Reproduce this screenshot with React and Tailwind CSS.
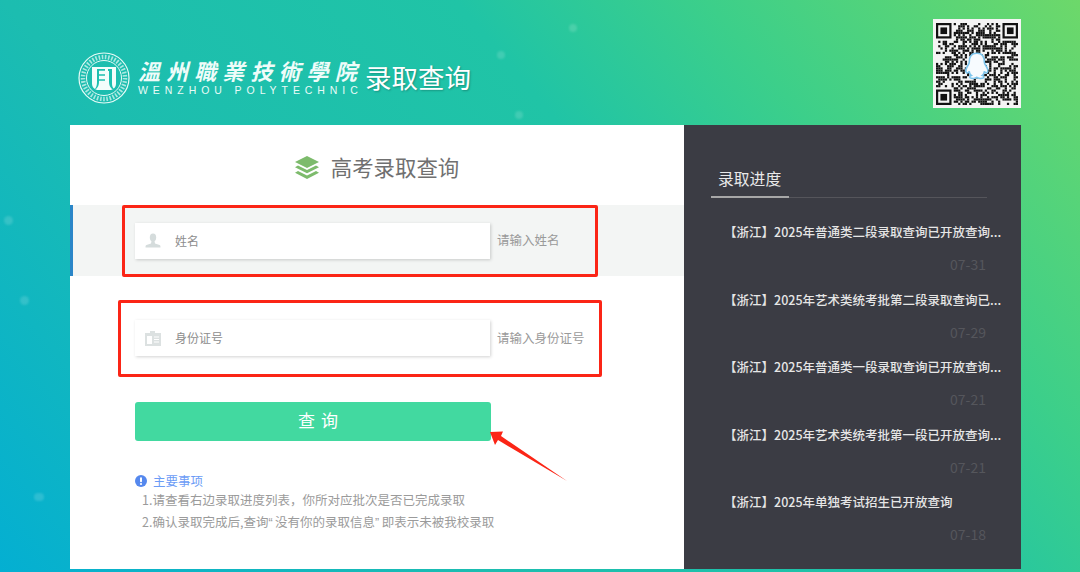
import React from "react";

const cjk = { fontFamily: '"Noto Sans CJK SC", "Liberation Sans", sans-serif' };

const progressItems = [
  { title: "【浙江】2025年普通类二段录取查询已开放查询...", date: "07-31" },
  { title: "【浙江】2025年艺术类统考批第二段录取查询已...", date: "07-29" },
  { title: "【浙江】2025年普通类一段录取查询已开放查询...", date: "07-21" },
  { title: "【浙江】2025年艺术类统考批第一段已开放查询...", date: "07-21" },
  { title: "【浙江】2025年单独考试招生已开放查询", date: "07-18" },
];

const dots = [
  "left-[569px] top-[24px] w-[8px] h-[8px]",
  "left-[497px] top-[51px] w-[8px] h-[8px]",
  "left-[515px] top-[111px] w-[8px] h-[8px]",
  "left-[4px] top-[216px] w-[9px] h-[9px]",
  "left-[20px] top-[296px] w-[9px] h-[9px]",
  "left-[34px] top-[493px] w-[10px] h-[8px]",
];

function Seal() {
  return (
    <svg width="52" height="52" viewBox="0 0 52 52" fill="none" className="shrink-0">
      <circle cx="26" cy="26" r="25" stroke="#e8fbf7" strokeWidth="1.2" />
      <circle cx="26" cy="26" r="17.500" stroke="#e8fbf7" strokeWidth="1" />
      <circle cx="26" cy="26" r="21" stroke="#e8fbf7" strokeWidth="4.500" strokeDasharray="1.6 1.6" opacity="0.7" />
      <path d="M14 15h24v17c0 3-2 5-5 6H19c-3-1-5-3-5-6z" fill="#f2fdfb" />
      <path d="M19 17h8v1.800h-6V30c0 3-1 5-3 7h-1c2-3 2-5 2-8zM30 17h4v14c0 3 .5 4 2 6h-2c-2-2-3-4-3-7V19h-1z" fill="#1cbfb0" />
      <path d="M21 23h6M21 28h6" stroke="#1cbfb0" strokeWidth="1.500" />
    </svg>
  );
}

// deterministic module pattern, only a picture of a code
function QrCode() {
  const size = 37;
  const cell = 2.2;
  const inFinder = (x, y) =>
    (x < 8 && y < 8) || (x > size - 9 && y < 8) || (x < 8 && y > size - 9);
  const modules = [];
  let seed = 7;
  for (let y = 0; y < size; y++) {
    for (let x = 0; x < size; x++) {
      seed = (seed * 1103515245 + 12345) & 0x7fffffff;
      if (!inFinder(x, y) && (seed >> 16) % 100 < 52) {
        modules.push(<rect key={`${x}-${y}`} x={x * cell} y={y * cell} width={cell} height={cell} />);
      }
    }
  }
  const finder = (x, y) => (
    <g key={`f${x}${y}`}>
      <rect x={x} y={y} width="15.400" height="15.400" fill="#111" />
      <rect x={x + 2.2} y={y + 2.2} width="11" height="11" fill="#f4f4f4" />
      <rect x={x + 4.4} y={y + 4.4} width="6.600" height="6.600" fill="#111" />
    </g>
  );
  return (
    <div className="w-[88px] h-[89px] bg-[#f4f4f4] shrink-0 flex items-center justify-center">
      <svg width="82" height="82" viewBox="0 0 81.400 81.400">
        <g fill="#111">{modules}</g>
        {finder(0, 0)}
        {finder(66, 0)}
        {finder(0, 66)}
        {/* penguin in the middle */}
        <path
          d="M41 30c5 0 7 4 7 9 0 1 .5 2 1.500 3.500 2 3 2.500 6 1 7-1 .5-2-.5-2.500-1.500 0 1.500-.5 3-2 4 1.500.5 2 1.500 1 2.500-1.500.8-5 .8-6.500-.5-1.500 1.300-5 1.300-6.500.5-1-1-.5-2 1-2.500-1.500-1-2-2.500-2-4-.5 1-1.500 2-2.500 1.500-1.500-1-1-4 1-7 1-1.500 1.500-2.500 1.500-3.500 0-5 2-9 7-9z"
          fill="#f7fbfe"
          stroke="#7cc4ec"
          strokeWidth="1.600"
        />
      </svg>
    </div>
  );
}

function PersonIcon() {
  return (
    <svg width="16" height="16" viewBox="0 0 16 16" fill="#d5dcdc">
      <ellipse cx="8" cy="4.500" rx="3.200" ry="4" />
      <path d="M6.500 8h3l.5 2.500 4.500 1.500c.8.300 1 1 1 2.500H.5c0-1.500.2-2.200 1-2.500L6 10.500z" />
    </svg>
  );
}

function CardIcon() {
  return (
    <svg width="16" height="15" viewBox="0 0 16 15">
      <path d="M0 2h5V0h5v2h6v13H0z" fill="#dce1e1" />
      <rect x="2" y="5" width="5" height="8" fill="#fff" />
      <path d="M9 6h5M9 8.500h5M9 11h5" stroke="#fff" strokeWidth="1" />
    </svg>
  );
}

function InputRow({ icon, label, hint }) {
  return (
    <div className="flex items-center ml-[65px]">
      <div className="w-[355px] h-9 bg-white flex items-center shadow-[1px_1px_3px_rgba(0,0,0,0.18)]">
        <div className="w-10 pl-[10px] flex items-center">{icon}</div>
        <span className="text-[12px] text-[#8d8d8d]">{label}</span>
      </div>
      <span className="ml-[7px] text-[12.500px] text-[#9a9a9a] whitespace-nowrap">{hint}</span>
    </div>
  );
}

export default function App() {
  return (
    <div
      className="relative w-[1080px] h-[572px] overflow-hidden bg-[linear-gradient(50deg,#04afd2_0%,#1cbdb0_31%,#20c4a6_60%,#3ccf8a_76%,#6dd86a_100%)]"
      style={cjk}
    >
      {dots.map((d) => (
        <span key={d} className={`absolute rounded-full bg-white/15 blur-[1px] ${d}`} />
      ))}

      <header className="h-[125px] pl-[78px] pr-[59px] flex justify-between">
        <div className="flex items-start pt-[52px]">
          <Seal />
          <div className="w-[222px] ml-[8px] pt-[5px] text-white">
            <div
              className="text-[22px] leading-[26px] italic font-bold tracking-[6.100px] whitespace-nowrap text-[#eefcf9]"
              style={{ fontFamily: '"Noto Sans CJK TC", serif' }}
            >
              溫州職業技術學院
            </div>
            <div
              className="mt-[1px] text-[10.500px] leading-[13px] tracking-[4.930px] whitespace-nowrap text-[#e8fbf7]"
              style={{ fontFamily: '"Liberation Sans", sans-serif' }}
            >
              WENZHOU POLYTECHNIC
            </div>
          </div>
          <div className="ml-[5px] mt-[6px] text-[26.500px] leading-[38px] text-white whitespace-nowrap [text-shadow:1px_1px_2px_rgba(0,0,0,0.25)]">
            录取查询
          </div>
        </div>
        <div className="pt-[19px]">
          <QrCode />
        </div>
      </header>

      <main className="relative ml-[70px] w-[951px] h-[444px] flex">
        <section className="w-[614px] bg-white">
          <h1 className="h-20 flex items-center justify-center pt-[5px] text-[21.400px] font-normal text-[#707070]">
            <svg width="24" height="24" viewBox="0 0 24 24" className="mr-3">
              <path d="M12 0l12 6-12 6L0 6z" fill="#7dbb6c" />
              <path d="M3 9.500l9 4.500 9-4.500 3 1.700-12 6-12-6z" fill="#7dbb6c" />
              <path d="M3 15l9 4.500 9-4.500 3 1.800-12 6.200-12-6.200z" fill="#7dbb6c" />
            </svg>
            高考录取查询
          </h1>

          <div className="h-[71px] flex items-center bg-[#f3f5f4] border-l-[3px] border-[#2a86c8]">
            <div className="-ml-[3px]">
              <InputRow icon={<PersonIcon />} label="姓名" hint="请输入姓名" />
            </div>
          </div>

          <div className="h-[36px] mt-[44px] flex items-center">
            <InputRow icon={<CardIcon />} label="身份证号" hint="请输入身份证号" />
          </div>

          <button className="block ml-[65px] mt-[46px] w-[356px] h-[39px] pl-[16px] pb-[3px] rounded-[3px] bg-[#42d9a0] text-white text-[17px] tracking-[6px]">
            查询
          </button>

          <div className="ml-[65px] mt-[30px]">
            <div className="flex items-center text-[12.500px] leading-[20px] text-[#6c9cf6]">
              <svg width="12" height="12" viewBox="0 0 12 12" className="mr-[6px]">
                <circle cx="6" cy="6" r="6" fill="#5588ee" />
                <rect x="5" y="2.200" width="2" height="5" rx="1" fill="#fff" />
                <circle cx="6" cy="9" r="1.100" fill="#fff" />
              </svg>
              主要事项
            </div>
            <p className="pl-[7px] -mt-[2px] text-[12.500px] leading-[22px] text-[#9b9b9b] whitespace-nowrap">
              1.请查看右边录取进度列表，你所对应批次是否已完成录取
            </p>
            <p className="pl-[7px] text-[12.500px] leading-[22px] text-[#9b9b9b] whitespace-nowrap">
              2.确认录取完成后,查询<span className="font-['Liberation_Sans'] tracking-[2.500px]">“</span>没有你的录取信息<span className="font-['Liberation_Sans'] tracking-[2.500px]">”</span>即表示未被我校录取
            </p>
          </div>
        </section>

        <aside className="w-[337px] bg-[#3b3c44] pl-[27px] pr-[34px] pt-[40px]">
          <div className="border-b border-[#55555b] h-[33px]">
            <span className="inline-block w-[78px] h-[33px] pl-[7px] text-[15.800px] leading-[28px] text-[#e9e9e9] border-b-2 border-[#a7a7a7]">
              录取进度
            </span>
          </div>
          <ul className="mt-[21px] -mr-[16px] pl-[13px]">
            {progressItems.map((item) => (
              <li key={item.title + item.date} className="h-[67.500px]">
                <div className="text-[12.500px] leading-[26px] font-medium text-[#e6e6e6] whitespace-nowrap">
                  {item.title}
                </div>
                <div className="pr-[17px] mt-[10px] text-right text-[14px] leading-[18px] text-[#55565c]">
                  {item.date}
                </div>
              </li>
            ))}
          </ul>
        </aside>
      </main>

      {/* hand drawn marks that lie over the page */}
      <div className="absolute left-[122px] top-[205px] w-[476px] h-[72px] border-[3px] border-[#fb2516] rounded-[2px]" />
      <div className="absolute left-[118px] top-[300px] w-[484px] h-[77px] border-[3px] border-[#fb2516] rounded-[2px]" />
      <svg width="90" height="60" viewBox="0 0 90 60" className="absolute left-[485px] top-[425px]">
        <path d="M5 7L18 6.500 16 11 82 56 13 15 10 20z" fill="#fb2516" />
      </svg>
    </div>
  );
}
